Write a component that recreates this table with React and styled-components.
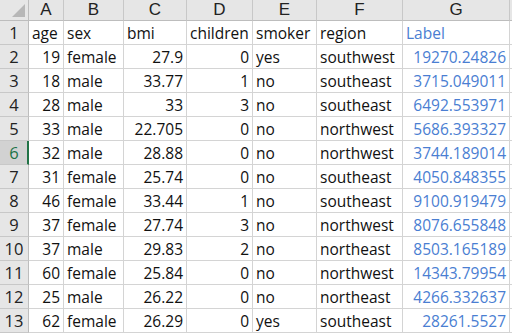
import React from "react";
import styled, { createGlobalStyle } from "styled-components";

const GlobalStyle = createGlobalStyle`
  html, body {
    margin: 0;
    padding: 0;
    background: #ffffff;
  }
`;

const columns = ["A", "B", "C", "D", "E", "F", "G"];
const widths = [29, 35, 60, 63, 66, 64, 86, 107];

const rows = [
  ["age", "sex", "bmi", "children", "smoker", "region", "Label"],
  [19, "female", "27.9", 0, "yes", "southwest", "19270.24826"],
  [18, "male", "33.77", 1, "no", "southeast", "3715.049011"],
  [28, "male", "33", 3, "no", "southeast", "6492.553971"],
  [33, "male", "22.705", 0, "no", "northwest", "5686.393327"],
  [32, "male", "28.88", 0, "no", "northwest", "3744.189014"],
  [31, "female", "25.74", 0, "no", "southeast", "4050.848355"],
  [46, "female", "33.44", 1, "no", "southeast", "9100.919479"],
  [37, "female", "27.74", 3, "no", "northwest", "8076.655848"],
  [37, "male", "29.83", 2, "no", "northeast", "8503.165189"],
  [60, "female", "25.84", 0, "no", "northwest", "14343.79954"],
  [25, "male", "26.22", 0, "no", "northeast", "4266.332637"],
  [62, "female", "26.29", 0, "yes", "southeast", "28261.5527"],
];

const Sheet = styled.div`
  display: grid;
  grid-template-columns: ${widths.map((w) => `${w}px`).join(" ")} 1fr;
  grid-template-rows: 21px;
  grid-auto-rows: 24px;
  width: 512px;
  height: 336px;
  overflow: hidden;
  font-family: "Open Sans", "Liberation Sans", Arial, sans-serif;
  background: #ffffff;
`;

const Corner = styled.div`
  position: relative;
  background: #e6e6e6;
  border-right: 1px solid #bdbdbd;
  border-bottom: 1px solid #bdbdbd;
  box-sizing: border-box;
  &::after {
    content: "";
    position: absolute;
    right: 3px;
    bottom: 3px;
    width: 0;
    height: 0;
    border-left: 13px solid transparent;
    border-bottom: 13px solid #b7b7b7;
  }
`;

const ColHead = styled.div`
  display: flex;
  align-items: center;
  justify-content: center;
  background: #e6e6e6;
  border-right: 1px solid #c8c8c8;
  border-bottom: 1px solid #bdbdbd;
  box-sizing: border-box;
  font-family: "Liberation Sans", Arial, sans-serif;
  font-size: 17px;
  line-height: 20px;
  color: #222222;
`;

const RowHead = styled.div`
  display: flex;
  align-items: center;
  justify-content: center;
  background: ${({ $active }) => ($active ? "#d2d2d2" : "#e6e6e6")};
  color: ${({ $active }) => ($active ? "#217346" : "#222222")};
  border-right: ${({ $active }) => ($active ? "2px solid #217346" : "1px solid #bdbdbd")};
  border-bottom: 1px solid #c8c8c8;
  box-sizing: border-box;
  font-size: 16.5px;
  line-height: 22px;
  padding-left: ${({ $active }) => ($active ? "1px" : "0")};
`;

const Cell = styled.div`
  display: flex;
  align-items: center;
  justify-content: ${({ $num }) => ($num ? "flex-end" : "flex-start")};
  padding: 0 3px 0 3px;
  border-right: 1px solid #d4d4d4;
  border-bottom: 1px solid #d4d4d4;
  box-sizing: border-box;
  font-size: 15.5px;
  line-height: 22px;
  color: ${({ $blue }) => ($blue ? "#4a7ed2" : "#111111")};
  white-space: nowrap;
  overflow: hidden;
`;

const Filler = styled.div`
  background: ${({ $head }) => ($head ? "#e6e6e6" : "#ffffff")};
  border-bottom: 1px solid ${({ $head }) => ($head ? "#bdbdbd" : "#d4d4d4")};
  box-sizing: border-box;
`;

const isNum = (v) => typeof v === "number" || /^[0-9.]+$/.test(String(v));

export default function App() {
  return (
    <>
      <GlobalStyle />
      <Sheet>
        <Corner />
        {columns.map((c) => (
          <ColHead key={c}>{c}</ColHead>
        ))}
        <Filler $head />
        {rows.map((row, r) => (
          <React.Fragment key={r}>
            <RowHead $active={r === 5}>{r + 1}</RowHead>
            {row.map((v, c) => (
              <Cell key={c} $num={r > 0 && isNum(v)} $blue={c === 6}>
                {v}
              </Cell>
            ))}
            <Filler />
          </React.Fragment>
        ))}
      </Sheet>
    </>
  );
}
